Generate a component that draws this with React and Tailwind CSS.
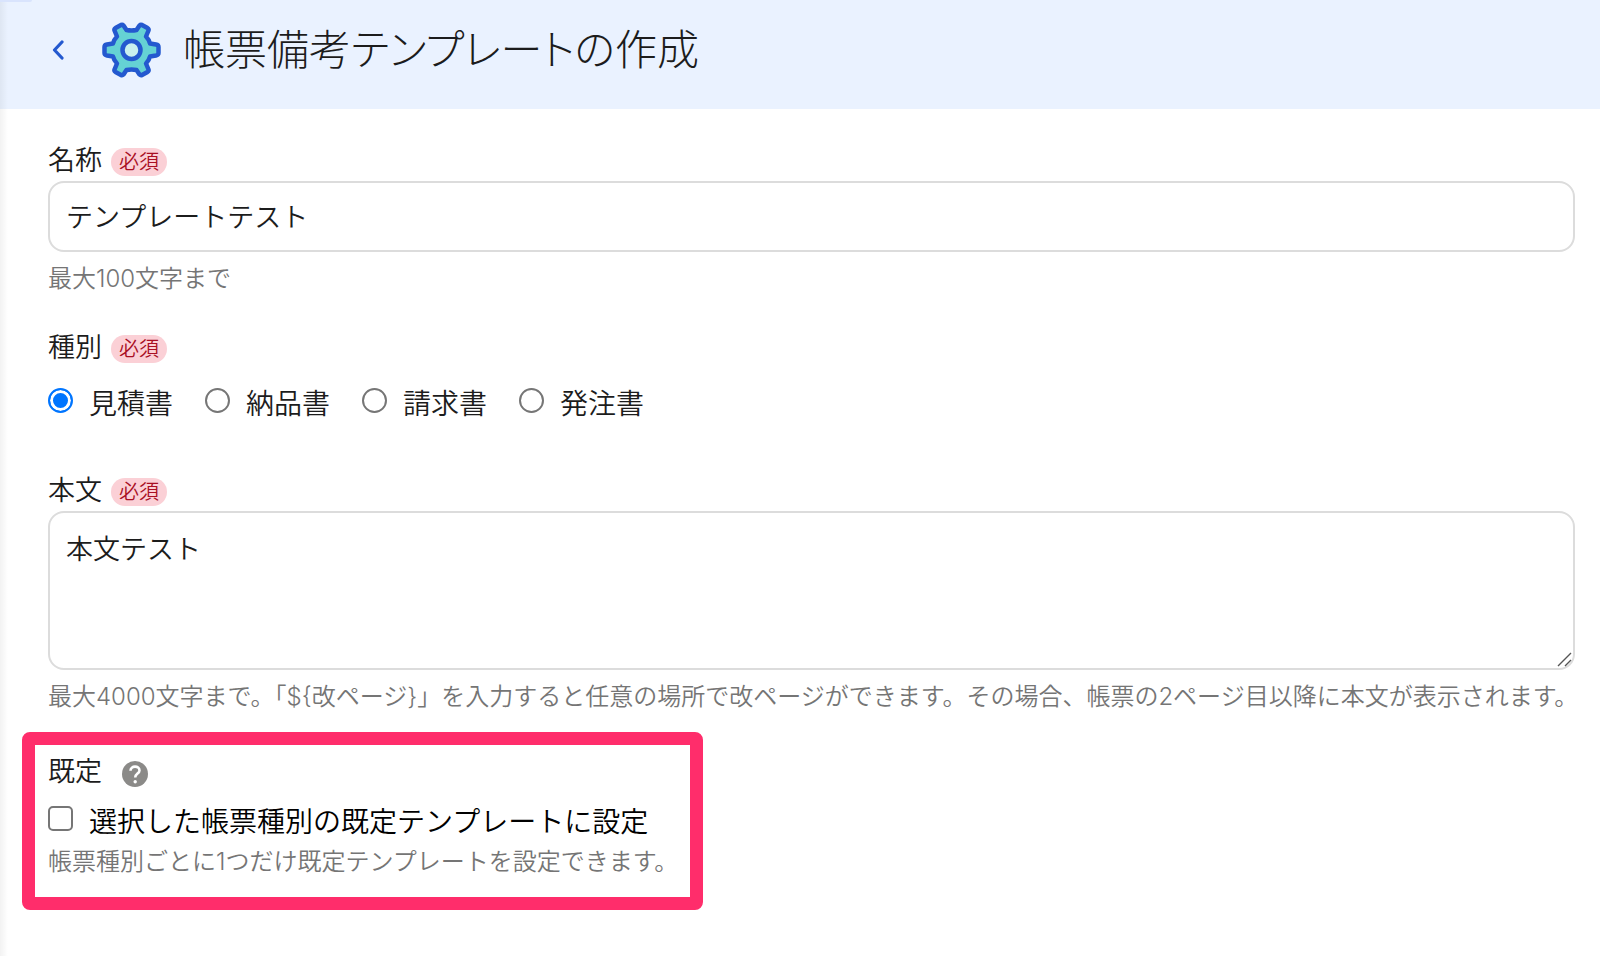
import React, { useState } from 'react';

const TYPES = [
    { value: 'estimate', label: '見積書' },
    { value: 'delivery', label: '納品書' },
    { value: 'invoice', label: '請求書' },
    { value: 'order', label: '発注書' },
];

const GearIcon = () => (
    <svg viewBox="0 0 60 60" className="h-[60px] w-[60px]" aria-hidden="true">
        <path
            d="M22.5 5.5 L25.500 10 Q30.500 11 35.500 10 L38.500 5.500 Q39.500 4.500 41 5 L46.500 8 Q48 9 47.500 10.500 L45 16.500 Q48 19.500 49 23.500 L55 24.500 Q57.500 25 57.500 27 V33 Q57.500 35 55 35.500 L49 36.500 Q48 40.500 45 43.500 L47.500 49.500 Q48 51 46.500 52 L41 55 Q39.500 55.500 38.500 54.500 L35.500 50 Q30.500 49 25.500 50 L22.500 54.500 Q21.500 55.500 20 55 L14.500 52 Q13 51 13.500 49.500 L16 43.500 Q13 40.500 12 36.500 L6 35.500 Q3.500 35 3.500 33 V27 Q3.500 25 6 24.500 L12 23.500 Q13 19.500 16 16.500 L13.500 10.500 Q13 9 14.500 8 L20 5 Q21.500 4.500 22.500 5.500 Z"
            fill="#65d2d4"
            stroke="#2459cf"
            strokeWidth="4.500"
            strokeLinejoin="round"
        />
        <circle cx="30.5" cy="30" r="9" fill="#c9f0ee" stroke="#2459cf" strokeWidth="4.500" />
    </svg>
);

const HelpIcon = () => (
    <svg viewBox="0 0 26 26" className="h-[26px] w-[26px]" aria-hidden="true">
        <circle cx="13" cy="13" r="13" fill="#8b8a88" />
        <path d="M8.500 9.800 C8.500 4.300 17.500 4.300 17.500 9.500 C17.500 12.500 13.200 12.800 13.200 16.500" fill="none" stroke="#fff" strokeWidth="2.600" />
        <circle cx="13.200" cy="20.700" r="1.700" fill="#fff" />
    </svg>
);

const Required = () => (
    <span className="mt-0.5 rounded-full bg-[#fbd0d6] px-2 text-[20px] leading-[28px] text-[#a90f24]">必須</span>
);

const Hint = ({ id, children }) => (
    <p id={id} className="text-[24px] leading-[38px] text-[#757575]">{children}</p>
);

const App = () => {
    const [name, setName] = useState('テンプレートテスト');
    const [type, setType] = useState('estimate');
    const [body, setBody] = useState('本文テスト');
    const [isDefault, setIsDefault] = useState(false);

    return (
        <div lang="ja" className="relative min-h-screen bg-white font-['Inter','Noto_Sans_CJK_JP',sans-serif] text-[28px] leading-[42px] font-[350] text-[#1c1c1c]">
            {/* Edge of the side menu */}
            <div className="absolute inset-y-0 left-0 w-2 bg-linear-to-r from-black/5 to-transparent" />
            <div className="absolute top-0 left-0 h-[2px] w-8 rounded-br bg-[#d9e4fd] shadow-md" />

            <header className="flex h-[109px] items-center bg-[#eaf2ff] pb-[10px] pl-[48px]">
                <button type="button" aria-label="戻る" className="flex w-5 justify-center">
                    <svg viewBox="0 0 12 20" className="h-[20px] w-[12px]" aria-hidden="true">
                        <path d="M10 2 L2.500 10 L10 18" fill="none" stroke="#2459cf" strokeWidth="3.200" strokeLinecap="round" strokeLinejoin="round" />
                    </svg>
                </button>
                <div className="ml-[33px]">
                    <GearIcon />
                </div>
                <h1 className="ml-[22px] text-[42px] leading-[60px] font-light [font-feature-settings:'palt']">帳票備考テンプレートの作成</h1>
            </header>

            <main className="pt-[32px]">
                <div className="pr-[25px] pl-[48px]">
                    <div className="flex items-center gap-[9px] text-[27px] leading-[40px]">
                        <label htmlFor="name">名称</label>
                        <Required />
                    </div>
                    <input
                        id="name"
                        type="text"
                        value={name}
                        onChange={(e) => setName(e.target.value)}
                        aria-describedby="name-hint"
                        className="mb-2 block h-[71px] w-full rounded-2xl border-2 border-[#dcdcdc] px-4 pb-0.5 text-[27px] outline-none"
                    />
                    <Hint id="name-hint">最大100文字まで</Hint>

                    <fieldset className="mt-[30px]">
                        <legend className="flex items-center gap-[9px] text-[27px] leading-[40px]">
                            種別
                            <Required />
                        </legend>
                        <div className="mt-[15px] flex gap-8">
                            {TYPES.map((item) => (
                                <label key={item.value} className="flex items-center gap-4">
                                    <input
                                        type="radio"
                                        name="type"
                                        value={item.value}
                                        checked={type === item.value}
                                        onChange={() => setType(item.value)}
                                        className="mb-2 h-[25px] w-[25px] appearance-none rounded-full border-2 border-[#767676] bg-white checked:border-[#0075ff] checked:bg-[#0075ff] checked:inset-ring-3 checked:inset-ring-white"
                                    />
                                    {item.label}
                                </label>
                            ))}
                        </div>
                    </fieldset>

                    <div className="mt-[46px] flex items-center gap-[9px] text-[27px] leading-[40px]">
                        <label htmlFor="body">本文</label>
                        <Required />
                    </div>
                    <div className="relative mb-2">
                        <textarea
                            id="body"
                            value={body}
                            onChange={(e) => setBody(e.target.value)}
                            aria-describedby="body-hint"
                            className="block h-[159px] w-full resize-none rounded-2xl border-2 border-[#dcdcdc] px-4 py-4 text-[27px] outline-none"
                        />
                        <svg viewBox="0 0 16 16" className="pointer-events-none absolute right-[3px] bottom-[3px] h-4 w-4" aria-hidden="true">
                            <path d="M2 15 L15 2 M9 15 L15 9" stroke="#555" strokeWidth="1.400" />
                        </svg>
                    </div>
                    <div className="-mr-[25px]">
                        <Hint id="body-hint">{'最大4000文字まで。「${改ページ}」を入力すると任意の場所で改ページができます。その場合、帳票の2ページ目以降に本文が表示されます。'}</Hint>
                    </div>
                </div>

                <section className="mt-4 ml-[22px] w-fit rounded-lg border-[13px] border-[#ff2d6b] pt-[6px] pr-3 pb-[16px] pl-[13px]">
                    <div className="flex items-center gap-5 text-[27px]">
                        <h2>既定</h2>
                        <button type="button" aria-label="ヘルプ" className="mt-1">
                            <HelpIcon />
                        </button>
                    </div>
                    <label className="mt-2 flex items-center gap-4 text-black">
                        <input
                            type="checkbox"
                            checked={isDefault}
                            onChange={(e) => setIsDefault(e.target.checked)}
                            className="mb-2 h-[25px] w-[25px] appearance-none rounded-[5px] border-2 border-[#767676] bg-white checked:border-[#0075ff] checked:bg-[#0075ff]"
                        />
                        選択した帳票種別の既定テンプレートに設定
                    </label>
                    <Hint>帳票種別ごとに1つだけ既定テンプレートを設定できます。</Hint>
                </section>
            </main>
        </div>
    );
};

export default App;
